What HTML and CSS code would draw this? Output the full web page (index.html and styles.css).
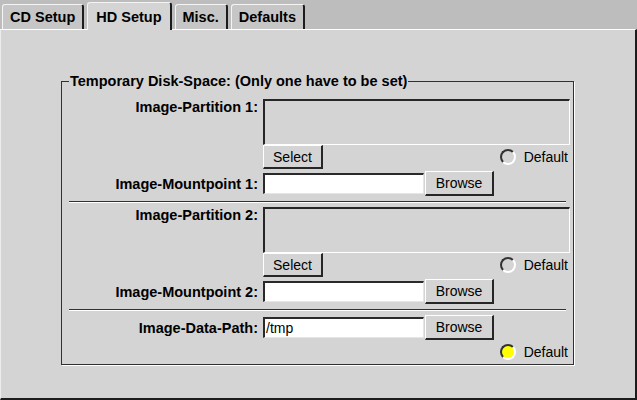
FILE: index.html
```html
<!DOCTYPE html>
<html>
<head>
<meta charset="utf-8">
<link rel="stylesheet" href="styles.css">
</head>
<body>
<div class="tabs">
  <div class="tab">CD Setup</div>
  <div class="tab active">HD Setup</div>
  <div class="tab">Misc.</div>
  <div class="tab">Defaults</div>
</div>
<div class="panel">
  <fieldset class="frame">
    <legend>Temporary Disk-Space: (Only one have to be set)</legend>
    <div class="row r-list">
      <div class="label top">Image-Partition 1:</div>
      <div class="listbox"></div>
    </div>
    <div class="row r-select">
      <div></div>
      <div class="line">
        <button class="btn select">Select</button>
        <span class="radio"><span class="dot"></span>Default</span>
      </div>
    </div>
    <div class="row r-input">
      <div class="label">Image-Mountpoint 1:</div>
      <div class="line start">
        <div class="input"></div>
        <button class="btn browse">Browse</button>
      </div>
    </div>
    <div class="sep"></div>
    <div class="row r-list">
      <div class="label top">Image-Partition 2:</div>
      <div class="listbox"></div>
    </div>
    <div class="row r-select">
      <div></div>
      <div class="line">
        <button class="btn select">Select</button>
        <span class="radio"><span class="dot"></span>Default</span>
      </div>
    </div>
    <div class="row r-input">
      <div class="label">Image-Mountpoint 2:</div>
      <div class="line start">
        <div class="input"></div>
        <button class="btn browse">Browse</button>
      </div>
    </div>
    <div class="sep"></div>
    <div class="row r-input first">
      <div class="label">Image-Data-Path:</div>
      <div class="line start">
        <div class="input">/tmp</div>
        <button class="btn browse">Browse</button>
      </div>
    </div>
    <div class="row r-radio">
      <div></div>
      <div class="line end">
        <span class="radio"><span class="dot on"></span>Default</span>
      </div>
    </div>
  </fieldset>
</div>
</body>
</html>
```
FILE: styles.css
```css
* { box-sizing: border-box; }
html, body { margin: 0; padding: 0; }
body {
  width: 637px;
  height: 400px;
  overflow: hidden;
  background: #bdbdbd;
  font-family: "Liberation Sans", Arial, sans-serif;
  font-size: 14px;
  color: #000;
}
.tabs {
  display: flex;
  align-items: flex-end;
  height: 29px;
  padding-left: 2px;
  gap: 3px;
}
.tab {
  height: 25px;
  padding: 1px 7px 0 7px;
  background: #c6c6c6;
  border-top: 1px solid #f4f4f4;
  border-left: 1px solid #f4f4f4;
  border-right: 2px solid #1c1c1c;
  border-radius: 3px 3px 0 0;
  font-weight: bold;
  font-size: 14.5px;
  line-height: 23px;
}
.tab.active {
  height: 28px;
  margin-bottom: -1px;
  padding: 3px 8px 0 8px;
  background: #d4d4d4;
  position: relative;
  z-index: 1;
}
.panel {
  height: 371px;
  background: #d4d4d4;
  border-top: 1px solid #ffffff;
  border-left: 1px solid #ececec;
  border-right: 2px solid #1c1c1c;
  border-bottom: 2px solid #1c1c1c;
}
.frame {
  margin: 43px 0 0 60px;
  width: 513px;
  padding: 10px 0 2px 0;
  border: 1px solid #303030;
  box-shadow: 1px 1px 0 #ffffff;
  min-inline-size: 0;
}
.frame legend {
  margin-left: 7px;
  padding: 0 1px;
  font-weight: bold;
  font-size: 14.5px;
  line-height: 16px;
}
.row {
  display: grid;
  grid-template-columns: 196px 307px;
  column-gap: 5px;
  align-items: center;
}
.label {
  text-align: right;
  font-weight: bold;
  font-size: 14.5px;
  line-height: 16px;
}
.label.top { align-self: start; }
.listbox {
  height: 46px;
  border-top: 2px solid #262626;
  border-left: 2px solid #262626;
  border-right: 1px solid #ffffff;
  border-bottom: 1px solid #ffffff;
}
.line {
  display: flex;
  align-items: center;
  justify-content: space-between;
}
.line.start { justify-content: flex-start; gap: 1px; }
.line.end { justify-content: flex-end; }
.r-select { height: 24px; }
.r-input { margin-top: 2px; height: 25px; }
.r-input.first { margin-top: 0; }
.r-radio { height: 20px; margin-top: 2px; }
.btn {
  font-family: inherit;
  font-size: 14px;
  color: #000;
  background: #d4d4d4;
  border-top: 1px solid #ffffff;
  border-left: 1px solid #ffffff;
  border-right: 2px solid #262626;
  border-bottom: 2px solid #262626;
  border-radius: 0;
  padding: 0;
  margin: 0;
}
.select { width: 60px; height: 24px; }
.browse { width: 69px; height: 25px; }
.input {
  width: 161px;
  height: 21px;
  background: #ffffff;
  border-top: 2px solid #2a2a2a;
  border-left: 2px solid #2a2a2a;
  border-right: 1px solid #e6e6e6;
  border-bottom: 1px solid #e6e6e6;
  padding-left: 1px;
  line-height: 18px;
}
.radio {
  display: flex;
  align-items: center;
  gap: 8px;
  margin-right: 2px;
}
.dot {
  width: 16px;
  height: 16px;
  border-radius: 50%;
  border: 2px solid;
  border-color: #333333 #ffffff #ffffff #333333;
  background: #d4d4d4;
}
.dot.on { background: #ffff00; }
.sep {
  margin: 5px 7px 4px 7px;
  height: 2px;
  border-top: 1px solid #303030;
  border-bottom: 1px solid #ffffff;
}
```
